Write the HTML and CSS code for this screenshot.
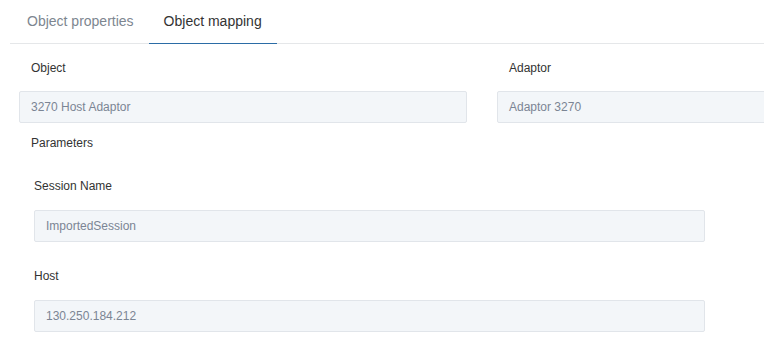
FILE: index.html
```html
<!DOCTYPE html>
<html lang="en">
<head>
<meta charset="utf-8">
<title>Object mapping</title>
<link rel="stylesheet" href="styles.css">
</head>
<body>
<div class="page">
  <div class="tabs">
    <div class="tab">Object properties</div>
    <div class="tab active">Object mapping</div>
  </div>
  <div class="form">
    <div class="row">
      <div class="field">
        <div class="label">Object</div>
        <div class="input">3270 Host Adaptor</div>
      </div>
      <div class="field">
        <div class="label">Adaptor</div>
        <div class="input">Adaptor 3270</div>
      </div>
    </div>
    <div class="section-title">Parameters</div>
    <div class="params">
      <div class="param">
        <div class="plabel">Session Name</div>
        <div class="input">ImportedSession</div>
      </div>
      <div class="param">
        <div class="plabel">Host</div>
        <div class="input">130.250.184.212</div>
      </div>
    </div>
  </div>
</div>
</body>
</html>
```
FILE: styles.css
```css
html, body {
  margin: 0;
  padding: 0;
  background: #ffffff;
}
body {
  font-family: "Liberation Sans", Arial, sans-serif;
  color: #333333;
}
.page {
  width: 764px;
  height: 347px;
  overflow: hidden;
}
.tabs {
  display: flex;
  margin-left: 10px;
  padding-left: 2px;
  height: 43px;
  border-bottom: 1px solid #e5e7e9;
}
.tab {
  padding: 0 15px;
  font-size: 14px;
  line-height: 43px;
  color: #7d8690;
}
.tab.active {
  color: #333333;
  box-sizing: border-box;
  height: 44px;
  margin-bottom: -1px;
  border-bottom: 1px solid #2b6ca6;
  line-height: 42px;
}
.form {
  padding-left: 19px;
}
.row {
  display: grid;
  grid-template-columns: 448px 448px;
  column-gap: 30px;
  margin-top: 16px;
}
.label {
  padding-left: 12px;
  font-size: 12px;
  line-height: 16px;
  margin-bottom: 15px;
}
.input {
  box-sizing: border-box;
  height: 32px;
  border: 1px solid #e1e5ea;
  border-radius: 2px;
  background: #f3f6f9;
  padding: 0 11px;
  font-size: 12px;
  line-height: 30px;
  color: #7b8594;
  white-space: nowrap;
  overflow: hidden;
}
.section-title {
  padding-left: 12px;
  margin-top: 12px;
  font-size: 12px;
  line-height: 16px;
}
.params {
  width: 671px;
  margin-left: 15px;
}
.param {
  margin-top: 27px;
}
.param + .param {
  margin-top: 26px;
}
.plabel {
  font-size: 12px;
  line-height: 16px;
  margin-bottom: 16px;
}
```
